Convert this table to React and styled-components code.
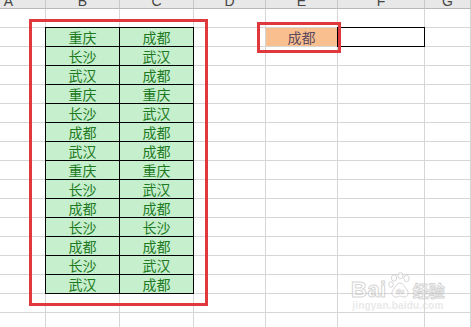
import React from 'react';
import styled, { createGlobalStyle, css } from 'styled-components';

const GlobalStyle = createGlobalStyle`
  html, body {
    margin: 0;
    padding: 0;
    background: #fff;
  }
`;

const Page = styled.div`
  position: relative;
  width: 471px;
  height: 327px;
  overflow: hidden;
  background: #fff;
  font-family: 'Noto Sans CJK SC', 'Noto Sans', sans-serif;
`;

const Sheet = styled.div`
  display: grid;
  grid-template-columns: 46px 74px 74px 72px 72px 87px 1fr;
  grid-template-rows: 9px;
  grid-auto-rows: 19px;
`;

const HeadCell = styled.div`
  box-sizing: border-box;
  background: #e8e8e8;
  border-right: 1px solid #c8c8c8;
  border-bottom: 1px solid #b8b8b8;
  overflow: hidden;
  display: flex;
  justify-content: center;
  align-items: flex-start;
  padding-right: ${({ $pad }) => $pad || 0}px;
  font: 14px/14px 'Liberation Sans', Arial, sans-serif;
  color: #444;

  span {
    margin-top: -6px;
  }
`;

const Cell = styled.div`
  box-sizing: border-box;
  border-right: 1px solid #d6d6d6;
  border-bottom: 1px solid #d6d6d6;
  display: flex;
  align-items: center;
  justify-content: center;
  font-size: 14px;
  line-height: 18px;
  white-space: nowrap;

  ${({ $kind }) =>
    $kind === 'data' &&
    css`
      position: relative;
      z-index: 1;
      margin: -1px 0 0 -1px;
      border: 1px solid #000;
      background: #c6efce;
      color: #1f7a1f;
    `}

  ${({ $kind }) =>
    $kind === 'pick' &&
    css`
      background: #f9bf8f;
      color: #5e4a5e;
    `}

  ${({ $kind }) =>
    $kind === 'target' &&
    css`
      position: relative;
      z-index: 1;
      margin: -1px 0 0 -1px;
      border: 1px solid #000;
      background: #fff;
    `}
`;

const Mark = styled.div`
  position: absolute;
  z-index: 3;
  box-sizing: border-box;
  border: 3px solid #e0393d;
  pointer-events: none;
`;

const Watermark = styled.div`
  position: absolute;
  z-index: 4;
  left: 351px;
  top: 272px;
  display: flex;
  flex-direction: column;
  align-items: center;
  opacity: 0.55;
`;

const BrandRow = styled.div`
  display: flex;
  align-items: flex-end;
  gap: 1px;
`;

const BrandText = styled.span`
  font: bold 22px/20px 'Liberation Sans', Arial, sans-serif;
  color: #fff;
  -webkit-text-stroke: 1px #b5b5b5;
  letter-spacing: 0.5px;
`;

const BrandCjk = styled.span`
  font: bold 16px/19px 'Noto Sans CJK SC', sans-serif;
  color: #fff;
  -webkit-text-stroke: 1px #b5b5b5;
`;

const SiteText = styled.div`
  font: bold 10px/12px 'Liberation Sans', Arial, sans-serif;
  color: #d8d8d8;
  letter-spacing: 0.2px;
`;

const COLS = ['A', 'B', 'C', 'D', 'E', 'F', 'G'];

const ROWS = [
  ['重庆', '成都'],
  ['长沙', '武汉'],
  ['武汉', '成都'],
  ['重庆', '重庆'],
  ['长沙', '武汉'],
  ['成都', '成都'],
  ['武汉', '成都'],
  ['重庆', '重庆'],
  ['长沙', '武汉'],
  ['成都', '成都'],
  ['长沙', '长沙'],
  ['成都', '成都'],
  ['长沙', '武汉'],
  ['武汉', '成都'],
];

const Paw = () => (
  <svg width="24" height="28" viewBox="0 0 24 28" fill="#fff" stroke="#b5b5b5" strokeWidth="1">
    <ellipse cx="6" cy="6" rx="2.6" ry="3.2" />
    <ellipse cx="12.5" cy="3.6" rx="2.6" ry="3" />
    <ellipse cx="18.5" cy="6.5" rx="2.6" ry="3.2" />
    <ellipse cx="3" cy="12.5" rx="2.3" ry="2.8" />
    <path d="M12 11c-3 0-5 4-7 7-2 3-1 7 3 7 2 0 3-1 4-1s2 1 4 1c4 0 5-4 3-7-2-3-4-7-7-7z" />
    <text x="12" y="22" textAnchor="middle" fontSize="7" fontWeight="bold" fontFamily="Liberation Sans, Arial, sans-serif" fill="#fff" stroke="#b5b5b5" strokeWidth="0.6">du</text>
  </svg>
);

const kindFor = (row, col) => {
  if (row >= 2 && row <= 15 && (col === 1 || col === 2)) return 'data';
  if (row === 2 && col === 4) return 'pick';
  if (row === 2 && col === 5) return 'target';
  return undefined;
};

const textFor = (row, col) => {
  if (row >= 2 && row <= 15 && (col === 1 || col === 2)) return ROWS[row - 2][col - 1];
  if (row === 2 && col === 4) return '成都';
  return '';
};

export default function App() {
  const rows = Array.from({ length: 17 }, (_, i) => i + 1);

  return (
    <Page>
      <GlobalStyle />
      <Sheet>
        {COLS.map((c, i) => (
          <HeadCell key={c} $pad={i === 0 ? 28 : 0}>
            <span>{c}</span>
          </HeadCell>
        ))}
        {rows.map((r) =>
          COLS.map((c, ci) => (
            <Cell key={`${c}${r}`} $kind={kindFor(r, ci)}>
              {textFor(r, ci)}
            </Cell>
          ))
        )}
      </Sheet>

      <Mark style={{ left: 29, top: 19, width: 179, height: 287 }} />
      <Mark style={{ left: 257, top: 22, width: 84, height: 31 }} />

      <Watermark>
        <BrandRow>
          <BrandText>Bai</BrandText>
          <Paw />
          <BrandCjk>经验</BrandCjk>
        </BrandRow>
        <SiteText>jingyan.baidu.com</SiteText>
      </Watermark>
    </Page>
  );
}
